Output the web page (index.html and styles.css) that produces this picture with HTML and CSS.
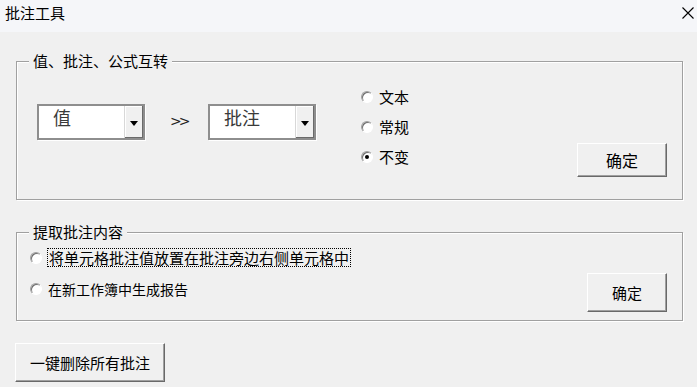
FILE: index.html
```html
<!DOCTYPE html>
<html lang="zh-CN">
<head>
<meta charset="utf-8">
<title>批注工具</title>
<link rel="stylesheet" href="styles.css">
</head>
<body>
<div class="window">
  <div class="titlebar">
    <span class="title">批注工具</span>
    <svg class="close" width="12" height="12" viewBox="0 0 12 12"><path d="M0.5 0.5 L11.5 11.5 M11.5 0.5 L0.5 11.5" stroke="#000" stroke-width="1.1" fill="none"/></svg>
  </div>
  <div class="content">
    <fieldset class="group g1">
      <legend>值、批注、公式互转</legend>
      <div class="g1-inner">
        <div class="combo"><span class="combo-text">值</span><span class="combo-btn"><span class="arrow"></span></span></div>
        <span class="chev">&gt;&gt;</span>
        <div class="combo"><span class="combo-text">批注</span><span class="combo-btn"><span class="arrow"></span></span></div>
        <div class="radios">
          <div class="radio"><span class="dot"></span><span>文本</span></div>
          <div class="radio"><span class="dot"></span><span>常规</span></div>
          <div class="radio"><span class="dot checked"></span><span>不变</span></div>
        </div>
        <button class="btn btn-ok1">确定</button>
      </div>
    </fieldset>
    <fieldset class="group g2">
      <legend>提取批注内容</legend>
      <div class="g2-inner">
        <div class="rows">
          <div class="radio r1"><span class="dot"></span><span class="focus">将单元格批注值放置在批注旁边右侧单元格中</span></div>
          <div class="radio r2"><span class="dot"></span><span>在新工作簿中生成报告</span></div>
        </div>
        <button class="btn btn-ok2">确定</button>
      </div>
    </fieldset>
    <button class="btn btn-del">一键删除所有批注</button>
  </div>
</div>
</body>
</html>
```
FILE: styles.css
```css
html, body {
  margin: 0;
  padding: 0;
}
body {
  background: #f0f0f0;
  font-family: "Noto Sans CJK SC", "Noto Sans", sans-serif;
  color: #000;
  width: 697px;
  height: 387px;
  overflow: hidden;
}
.window {
  width: 697px;
  height: 387px;
}
.titlebar {
  height: 32px;
  box-sizing: border-box;
  background: #f5f6f9;
  display: flex;
  justify-content: space-between;
  align-items: flex-start;
  padding: 4px 3px 0 5px;
}
.title {
  font-size: 15px;
  line-height: 18px;
}
.close {
  margin-top: 3px;
  display: block;
}
.content {
  padding: 20px 0 0 16px;
}
.group {
  margin: 0;
  padding: 0;
  width: 667px;
  min-width: 0;
  box-sizing: border-box;
  border: 1px solid #a0a0a0;
  box-shadow: inset 1px 1px 0 #fff, 1px 1px 0 #fff;
}
.group legend {
  margin-left: 12px;
  padding: 0 4px;
  font-size: 15px;
  line-height: 18px;
  background: #f0f0f0;
}
.g1-inner {
  height: 129px;
  display: flex;
  align-items: flex-start;
  padding-left: 20px;
}
.combo {
  margin-top: 34px;
  width: 108px;
  height: 36px;
  box-sizing: border-box;
  border: 2px solid #8e8e8e;
  box-shadow: 1px 1px 0 #fff;
  background: #fff;
  display: flex;
}
.combo-text {
  flex: 1;
  padding: 1px 0 0 14px;
  font-size: 18px;
  line-height: 20px;
  color: #3a3a3a;
}
.combo-btn {
  width: 19px;
  box-sizing: border-box;
  background: #f0f0f0;
  border-left: 1px solid #d8d8d8;
  box-shadow: inset -1px -1px 0 #6a6a6a, inset 1px 1px 0 #fff;
  display: flex;
  align-items: center;
  justify-content: center;
}
.arrow {
  width: 0;
  height: 0;
  border-left: 4.5px solid transparent;
  border-right: 4.5px solid transparent;
  border-top: 5px solid #000;
  margin-top: 3px;
}
.chev {
  display: block;
  width: 13px;
  margin: 42px 25px 0;
  font-family: "DejaVu Sans", sans-serif;
  font-size: 14px;
  line-height: 18px;
  letter-spacing: -3px;
  text-align: center;
  white-space: nowrap;
  color: #222;
}
.radios {
  margin-left: 45px;
  padding-top: 12px;
  display: flex;
  flex-direction: column;
}
.radio {
  display: flex;
  align-items: center;
  height: 30px;
  gap: 6px;
  font-size: 15px;
  line-height: 18px;
}
.dot {
  width: 12px;
  height: 12px;
  flex: none;
  box-sizing: border-box;
  border-radius: 50%;
  border: 1px solid;
  border-color: #a0a0a0 #fff #fff #a0a0a0;
  background: #fff;
  box-shadow: inset 1px 1px 0 #6e6e6e;
  display: flex;
  align-items: center;
  justify-content: center;
}
.dot.checked::after {
  content: "";
  width: 4px;
  height: 4px;
  border-radius: 50%;
  background: #000;
}
.btn {
  box-sizing: border-box;
  border: 1px solid;
  border-color: #fff #696969 #696969 #fff;
  box-shadow: inset -1px -1px 0 #a0a0a0;
  background: #f0f0f0;
  font-family: "Noto Sans CJK SC", "Noto Sans", sans-serif;
  font-size: 15px;
  line-height: 18px;
  color: #000;
  padding: 0;
  display: block;
}
.btn-ok1 {
  margin: 0 15px 22px auto;
  align-self: flex-end;
  width: 90px;
  height: 34px;
  font-size: 16px;
}
.g2 {
  margin-top: 23px;
}
.g2-inner {
  height: 79px;
  display: flex;
  align-items: flex-start;
}
.rows {
  padding: 1px 0 0 13px;
  display: flex;
  flex-direction: column;
}
.rows .radio {
  height: 31px;
}
.r1 {
  gap: 5px;
}
.r2 {
  gap: 6px;
  font-size: 14px;
}
.focus {
  border: 1px dotted #000;
  padding: 0 1px;
  line-height: 17px;
}
.btn-ok2 {
  margin: 0 15px 8px auto;
  align-self: flex-end;
  width: 80px;
  height: 39px;
}
.btn-del {
  margin: 22px 0 0 -1px;
  width: 150px;
  height: 39px;
}
```
